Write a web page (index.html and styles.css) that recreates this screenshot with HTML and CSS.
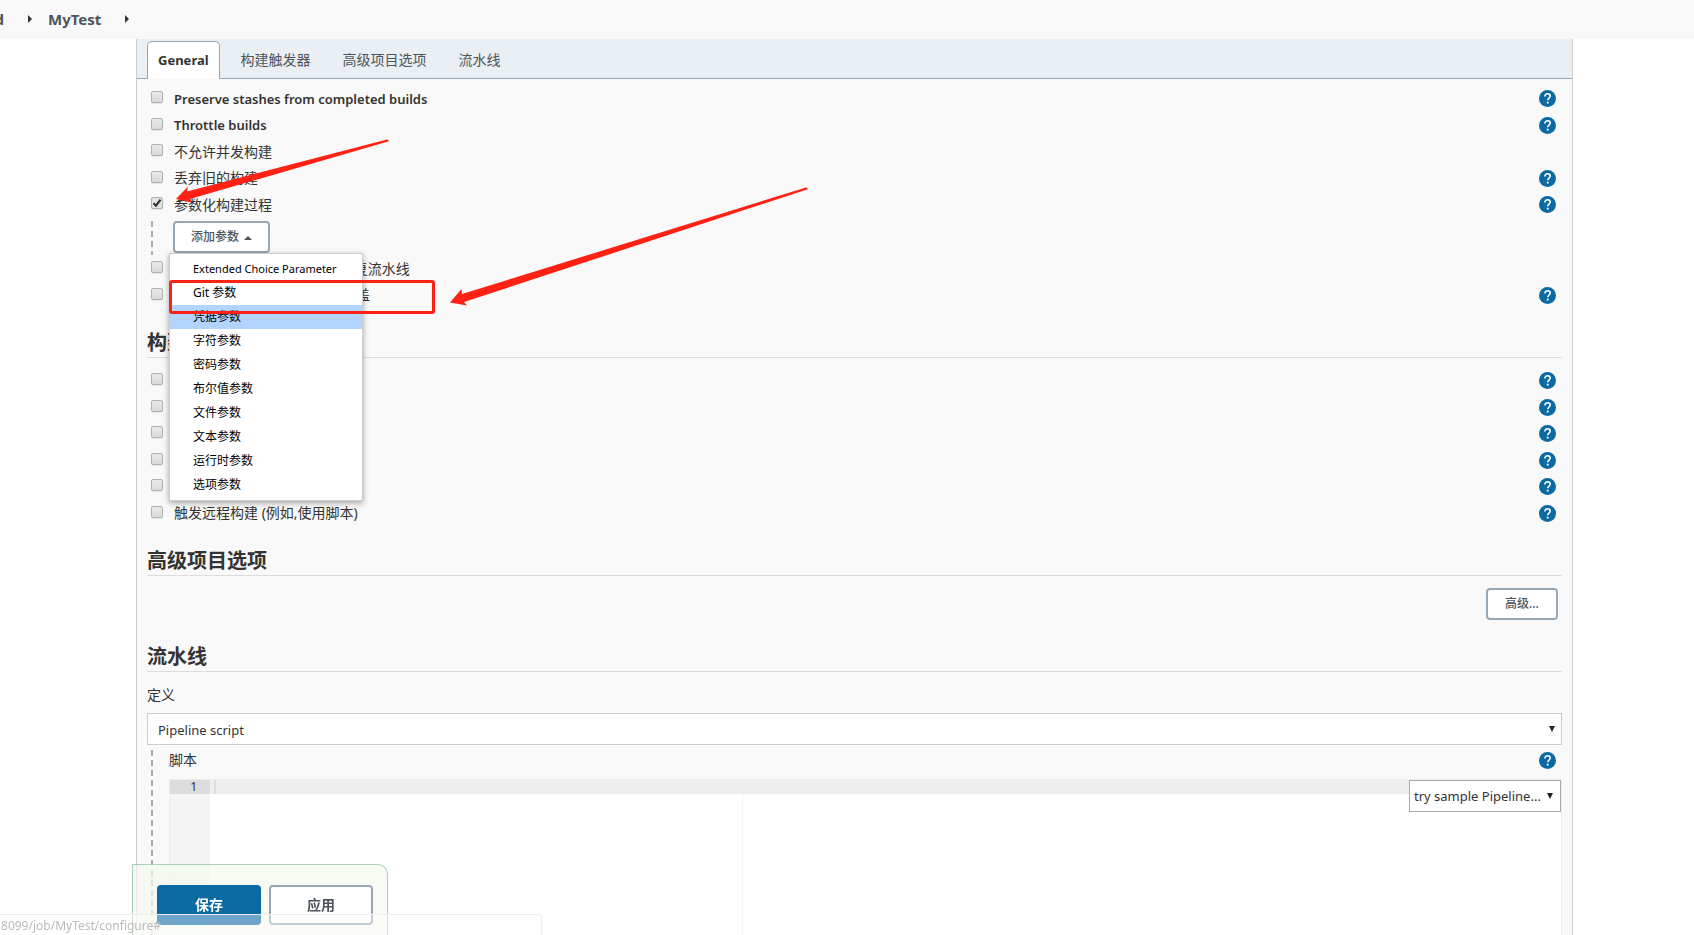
FILE: index.html
```html
<!DOCTYPE html>
<html lang="zh-CN">
<head>
    <meta charset="UTF-8">
    <meta name="viewport" content="width=device-width, initial-scale=1.0">
    <title>MyTest Config</title>
    <link rel="stylesheet" href="styles.css">
</head>
<body>
    <svg class="sprite" aria-hidden="true">
        <symbol id="help" viewBox="0 0 17 17">
            <circle cx="8.5" cy="8.5" r="8.5" fill="#0b6aa2"/>
            <path d="M5.9 6.4C5.9 4.8 7 3.8 8.6 3.8s2.6.9 2.6 2.3c0 1.9-2.5 2.1-2.5 4.2" fill="none" stroke="#fff" stroke-width="1.6"/>
            <rect x="7.8" y="11.7" width="1.8" height="1.8" fill="#fff"/>
        </symbol>
    </svg>

    <nav class="breadcrumbs">
        <a class="crumb crumb-cut" href="#">d</a>
        <span class="crumb-arrow"></span>
        <a class="crumb" href="#">MyTest</a>
        <span class="crumb-arrow"></span>
    </nav>

    <main class="panel">
        <div class="tabs">
            <a class="tab active" href="#general">General</a>
            <a class="tab" href="#triggers">构建触发器</a>
            <a class="tab" href="#advanced">高级项目选项</a>
            <a class="tab" href="#pipeline">流水线</a>
        </div>

        <form class="config">
            <section class="options" id="general">
                <div class="option">
                    <label class="semi"><input type="checkbox">Preserve stashes from completed builds</label>
                    <a class="help" href="#" aria-label="帮助"><svg><use href="#help"/></svg></a>
                </div>
                <div class="option">
                    <label class="semi"><input type="checkbox">Throttle builds</label>
                    <a class="help" href="#" aria-label="帮助"><svg><use href="#help"/></svg></a>
                </div>
                <div class="option">
                    <label><input type="checkbox">不允许并发构建</label>
                </div>
                <div class="option">
                    <label><input type="checkbox">丢弃旧的构建</label>
                    <a class="help" href="#" aria-label="帮助"><svg><use href="#help"/></svg></a>
                </div>
                <div class="option">
                    <label><input type="checkbox" checked>参数化构建过程</label>
                    <a class="help" href="#" aria-label="帮助"><svg><use href="#help"/></svg></a>
                </div>
            </section>

            <div class="nested">
                <div class="dropdown">
                    <button class="btn" type="button">添加参数<span class="caret-up"></span></button>
                    <ul class="menu">
                        <li><a class="latin" href="#">Extended Choice Parameter</a></li>
                        <li><a href="#">Git 参数</a></li>
                        <li><a class="selected" href="#">凭据参数</a></li>
                        <li><a href="#">字符参数</a></li>
                        <li><a href="#">密码参数</a></li>
                        <li><a href="#">布尔值参数</a></li>
                        <li><a href="#">文件参数</a></li>
                        <li><a href="#">文本参数</a></li>
                        <li><a href="#">运行时参数</a></li>
                        <li><a href="#">选项参数</a></li>
                    </ul>
                </div>
            </div>

            <section class="options">
                <div class="option">
                    <label><input type="checkbox">当 master 重启后，不允许恢复流水线</label>
                </div>
                <div class="option">
                    <label><input type="checkbox">流水线效率、持久保存设置覆盖</label>
                    <a class="help" href="#" aria-label="帮助"><svg><use href="#help"/></svg></a>
                </div>
            </section>

            <h2 id="triggers">构建触发器</h2>
            <section class="options">
                <div class="option">
                    <label><input type="checkbox">其他工程构建后触发</label>
                    <a class="help" href="#" aria-label="帮助"><svg><use href="#help"/></svg></a>
                </div>
                <div class="option">
                    <label><input type="checkbox">定时构建</label>
                    <a class="help" href="#" aria-label="帮助"><svg><use href="#help"/></svg></a>
                </div>
                <div class="option">
                    <label><input type="checkbox">轮询 SCM</label>
                    <a class="help" href="#" aria-label="帮助"><svg><use href="#help"/></svg></a>
                </div>
                <div class="option">
                    <label><input type="checkbox">关闭构建</label>
                    <a class="help" href="#" aria-label="帮助"><svg><use href="#help"/></svg></a>
                </div>
                <div class="option">
                    <label><input type="checkbox">静默期</label>
                    <a class="help" href="#" aria-label="帮助"><svg><use href="#help"/></svg></a>
                </div>
                <div class="option">
                    <label><input type="checkbox">触发远程构建 (例如,使用脚本)</label>
                    <a class="help" href="#" aria-label="帮助"><svg><use href="#help"/></svg></a>
                </div>
            </section>

            <h2 id="advanced">高级项目选项</h2>
            <div class="advanced">
                <button class="btn" type="button">高级...</button>
            </div>

            <h2 id="pipeline">流水线</h2>
            <label class="field-label" for="definition">定义</label>
            <select class="definition" id="definition">
                <option>Pipeline script</option>
            </select>

            <div class="nested script-block">
                <div class="script-head">
                    <label for="script">脚本</label>
                    <a class="help" href="#" aria-label="帮助"><svg><use href="#help"/></svg></a>
                </div>
                <div class="editor">
                    <div class="gutter"><div class="line-no">1</div></div>
                    <textarea id="script" spellcheck="false"></textarea>
                    <select class="samples" aria-label="try sample Pipeline">
                        <option>try sample Pipeline...</option>
                    </select>
                </div>
            </div>

            <div class="save-bar">
                <button class="btn btn-large primary" type="submit">保存</button>
                <button class="btn btn-large" type="button">应用</button>
            </div>
        </form>
    </main>

    <div class="status-url"><span>8099/job/MyTest/configure#</span></div>

    <!-- red marks over the form -->
    <div class="mark-box"></div>
    <svg class="marks" width="820" height="320" aria-hidden="true">
        <path d="M176 199L188 186.500L187 191.500L387 139.500Q390 140 388 141.500L190 199L192 202.500Z"/>
        <path d="M450 302.500L461.500 289L462 294L806 187.500Q809 188 807 189.500L464 302L467 305.500Z"/>
    </svg>
</body>
</html>
```
FILE: styles.css
```css
* {
    box-sizing: border-box;
}

body {
    margin: 0;
    height: 100vh;
    overflow: hidden;
    display: flex;
    flex-direction: column;
    background: #fff;
    color: #333;
    font-family: "Noto Sans", "Noto Sans CJK SC", sans-serif;
    font-size: 14px;
    line-height: 20px;
}

a {
    color: inherit;
    text-decoration: none;
}

button,
select,
textarea {
    font-family: inherit;
    color: inherit;
}

.sprite {
    position: absolute;
    width: 0;
    height: 0;
}

/* Breadcrumbs */
.breadcrumbs {
    display: flex;
    align-items: center;
    height: 39px;
    padding-bottom: 2px;
    flex: none;
    background: #f8f8f8;
}

.crumb {
    font-size: 15px;
    font-weight: 700;
    color: #4d545d;
}

.crumb-cut {
    display: flex;
    justify-content: flex-end;
    width: 4px;
    overflow: hidden;
}

.crumb-arrow {
    flex: none;
    border: 4px solid transparent;
    border-left-color: #333;
    border-right: 0;
    margin: 0 16px 0 24px;
}

/* Panel and tabs */
.panel {
    flex: 1;
    min-height: 0;
    display: flex;
    flex-direction: column;
    margin: 0 121px 0 136px;
    border: 1px solid #ccc;
    border-width: 0 1px;
    background: #f9f9f9;
}

.tabs {
    display: flex;
    align-items: flex-end;
    flex: none;
    height: 40px;
    padding-left: 10px;
    background: #e9eff2;
    border-bottom: 1px solid #98a8b0;
}

.tab {
    height: 37px;
    padding: 8px 10px;
    margin-right: 10px;
    border: 1px solid transparent;
    border-bottom: 0;
    color: #4d545d;
}

.tab.active {
    margin-bottom: -1px;
    height: 38px;
    background: #fff;
    border-color: #98a8b0;
    border-radius: 5px 5px 0 0;
    color: #333;
    font-size: 13px;
    font-weight: 700;
}

.config {
    flex: 1;
    min-height: 0;
    display: flex;
    flex-direction: column;
    padding: 6px 10px 0;
}

/* Check box rows */
.option {
    display: flex;
    justify-content: space-between;
    align-items: center;
    height: 27px;
    padding-right: 6px;
}

.option:nth-child(even) {
    height: 26px;
}

.option label {
    display: flex;
    align-items: center;
    padding-left: 4px;
}

.option .semi {
    font-size: 13px;
    font-weight: 600;
}

input[type="checkbox"] {
    appearance: none;
    width: 12px;
    height: 12px;
    margin: 0 11px 3px 0;
    border: 1px solid #b0b0b0;
    border-radius: 2px;
    background: linear-gradient(#e9e9e9, #dadada);
    box-shadow: 0 1px 1px rgba(0, 0, 0, 0.08);
}

input[type="checkbox"]:checked {
    background: url("data:image/svg+xml,%3Csvg xmlns='http://www.w3.org/2000/svg' viewBox='0 0 10 10'%3E%3Cpath d='M1.500 5.300L4 7.700L8.500 1.700' fill='none' stroke='%23333' stroke-width='2.200'/%3E%3C/svg%3E") center / 10px no-repeat, #e2e2e2;
}

.help {
    display: flex;
}

.help svg {
    width: 17px;
    height: 17px;
}

.nested {
    margin-left: 4px;
    background: repeating-linear-gradient(#aaa 0 6px, transparent 6px 10px) left top / 2px 100% no-repeat;
}

.dropdown {
    position: relative;
    display: flex;
    width: max-content;
    margin: 0 0 2px 22px;
}

.options + .nested {
    margin-top: 3px;
}

.btn {
    height: 32px;
    min-width: 72px;
    padding: 0 16px;
    background: #fff;
    border: 2px solid #98a8b3;
    border-radius: 4px;
    color: #4d545d;
    font-size: 12px;
    font-weight: 500;
    line-height: 16px;
}

.caret-up {
    display: inline-block;
    margin-left: 5px;
    border: 4px solid transparent;
    border-bottom-color: #4d545d;
    border-top: 0;
    vertical-align: middle;
}

.menu {
    position: absolute;
    z-index: 2;
    top: 100%;
    left: -4px;
    width: 194px;
    margin: 0;
    padding: 3px 0;
    list-style: none;
    background: #fff;
    border: 1px solid #ccc;
    box-shadow: 0 2px 6px rgba(0, 0, 0, 0.35);
    color: #000;
    font-size: 12px;
    line-height: 24px;
}

.menu a {
    display: block;
    padding-left: 23px;
}

.menu .latin {
    font-size: 11px;
}

.menu .selected {
    background: #b3d4ff;
}

h2 {
    margin: 21px 0 9px;
    border-bottom: 1px solid #ddd;
    font-size: 20px;
    font-weight: 700;
    line-height: 28px;
}

.advanced {
    display: flex;
    justify-content: flex-end;
    margin: 3px 4px 2px 0;
}

/* Pipeline definition */
.field-label {
    margin: 4px 0 8px;
}

select {
    appearance: none;
    flex: none;
    height: 32px;
    border: 1px solid #ccc;
    font-size: 13px;
    background: url("data:image/svg+xml,%3Csvg xmlns='http://www.w3.org/2000/svg' width='6' height='6'%3E%3Cpath d='M0 0H6L3 6Z' fill='%23222'/%3E%3C/svg%3E") right 6px center no-repeat, #fff;
}

.definition {
    width: 100%;
    padding: 2px 10px 0;
}

.script-block {
    flex: 1;
    min-height: 0;
    display: flex;
    flex-direction: column;
    margin-top: 5px;
    padding-left: 18px;
}

.script-head {
    display: flex;
    justify-content: space-between;
    align-items: center;
    padding: 0 6px 9px 0;
}

.editor {
    position: relative;
    flex: 1;
    display: flex;
    border: 1px solid #eee;
    border-bottom: 0;
    background: #fff;
}

.gutter {
    width: 40px;
    background: #f4f4f4;
    font-size: 12px;
}

.line-no {
    padding-right: 13px;
    background: #dcdcdc;
    line-height: 14px;
    text-align: right;
}

.editor textarea {
    flex: 1;
    padding: 0 4px;
    border: 0;
    resize: none;
    background:
        linear-gradient(#ddd, #ddd) 4px 0 / 2px 14px no-repeat,
        linear-gradient(#eee, #eee) 0 0 / 100% 14px no-repeat,
        linear-gradient(#f4f4f4, #f4f4f4) 532px 0 / 1px 100% no-repeat,
        #fff;
    font-size: 12px;
    line-height: 14px;
}

.samples {
    position: absolute;
    top: 0;
    right: 0;
    padding: 0 19px 0 4px;
    border-color: #a9a9a9;
    background-position: right 7px center;
}

/* Buttons stuck to the bottom of the window */
.save-bar {
    position: fixed;
    bottom: 0;
    left: 132px;
    display: flex;
    gap: 8px;
    padding: 20px 14px 10px 24px;
    border: 1px solid #a9cfb9;
    border-bottom: 0;
    border-radius: 0 10px 0 0;
    background: rgba(245, 250, 239, 0.7);
}

.btn-large {
    width: 104px;
    height: 40px;
    font-size: 14px;
    font-weight: 700;
}

.primary {
    background: #0b6aa2;
    border-color: #0b6aa2;
    color: #fff;
}

.status-url {
    position: fixed;
    left: 0;
    bottom: 0;
    width: 542px;
    height: 21px;
    border: 1px solid #eee;
    border-width: 1px 1px 0 0;
    border-radius: 0 4px 0 0;
    background: rgba(255, 255, 255, 0.4);
    color: #bbb;
    font-size: 12px;
    line-height: 22px;
}

.status-url span {
    display: flex;
    justify-content: flex-end;
    width: 161px;
    overflow: hidden;
}

.mark-box {
    position: absolute;
    z-index: 3;
    top: 280px;
    left: 169px;
    width: 266px;
    height: 34px;
    border: 3px solid #ff2113;
    border-radius: 3px;
}

.marks {
    position: absolute;
    z-index: 3;
    top: 0;
    left: 0;
    fill: #ff2113;
    pointer-events: none;
}
```
